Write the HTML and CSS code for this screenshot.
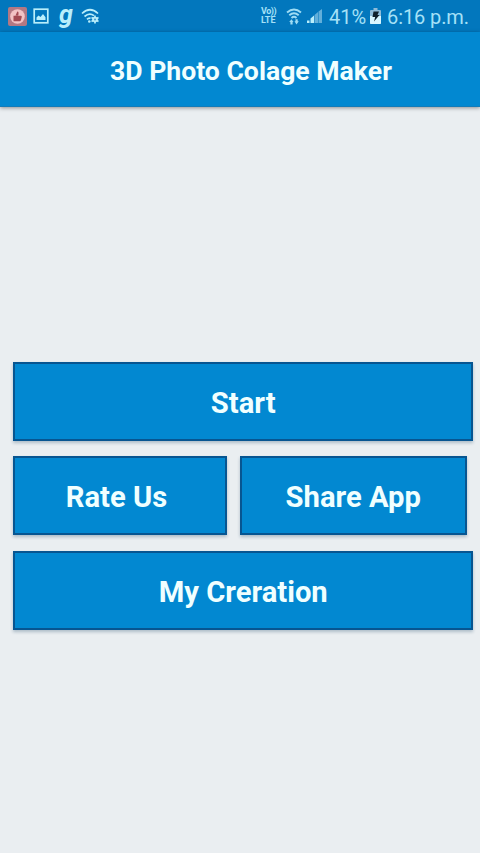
FILE: index.html
```html
<!DOCTYPE html>
<html lang="en">
<head>
<meta charset="utf-8">
<title>3D Photo Colage Maker</title>
<link rel="stylesheet" href="styles.css">
</head>
<body>
<div class="status">
  <div class="notices">
    <svg class="thumb" width="19" height="19" viewBox="0 0 19 19"><rect width="19" height="19" rx="2" fill="#b27883"/><circle cx="9.500" cy="9.500" r="7.300" fill="#f2c3c5"/><path d="M5.500 8.800h7.300c1.200 0 1 .8.900 1.500l-.7 2.700c-.3.900-.7 1.200-1.500 1.200H5.500zM7.500 8.500 9.300 4.500c1.400.2 1.500 1.200 1 4z" fill="#a34b54"/></svg>
    <svg class="image" width="16" height="16" viewBox="0 0 16 16"><rect x="1.200" y="1.200" width="13.600" height="13.600" fill="none" stroke="#b9eefb" stroke-width="1.700"/><path d="M3.500 12V9.500l2-2 2 1.500 2.500-3 2.500 3.200V12z" fill="#b9eefb"/></svg>
    <span class="letter">g</span>
    <svg class="wifi-set" width="19" height="16" viewBox="0 0 19 16"><g fill="none" stroke="#b9eefb" stroke-width="1.700"><path d="M1 5.500q8-7.500 16 0M3.500 8.500q5-4.500 9.500-.8M6 11.300q2-2 3.500-.8"/></g><path d="M14 7.500v8M10.500 9.500l7 4M17.500 9.500l-7 4" stroke="#b9eefb" stroke-width="1.700"/><circle cx="14" cy="11.500" r="2.800" fill="#b9eefb"/><circle cx="14" cy="11.500" r="1.100" fill="#4aa0d0"/><circle cx="8.300" cy="13.500" r="1.300" fill="#b9eefb"/></svg>
  </div>
  <div class="system">
    <div class="volte"><span>Vo))</span><span class="lte">LTE</span></div>
    <svg class="wifi" width="16" height="17" viewBox="0 0 16 17"><g fill="none" stroke="#9edcf4" stroke-width="1.900"><path d="M1 4.500q7-6 14 0M3.300 7.300q4.700-4.200 9.400 0M5.500 10q2.500-2.300 5 0"/></g><path d="M3.200 14 5.500 11.300 7.500 14H6.600v2.500H4.400V14zM8.500 13.300h1v-2h2.200v2h1.100L10.500 16.500z" fill="#9edcf4"/></svg>
    <svg class="signal" width="17" height="16" viewBox="0 0 17 16"><path d="M1 12.500h2.500V15H1zM4.500 10.500 8 7.500V15H4.500z" fill="#b9eefb"/><path d="M8.500 7 12 4v11H8.500zM12.500 3.500 16 1v14h-3.500z" fill="#62afda"/></svg>
    <span class="percent">41%</span>
    <svg class="battery" width="11" height="16" viewBox="0 0 11 16"><path d="M3.500 0h4v2H10q1 0 1 1v12q0 1-1 1H1q-1 0-1-1V3q0-1 1-1h2.500z" fill="#8dbbd8"/><path d="M0 8h11v7q0 1-1 1H1q-1 0-1-1z" fill="#d8f6ff"/><path d="M3.500 3.500H9L7.500 7H9.500L4 13.500 5.200 9H2.500z" fill="#10202b"/></svg>
    <span class="time">6:16 p.m.</span>
  </div>
</div>
<header class="bar"><h1>3D Photo Colage Maker</h1></header>
<main class="menu">
  <button class="btn">Start</button>
  <div class="pair">
    <button class="btn rate">Rate Us</button>
    <button class="btn">Share App</button>
  </div>
  <button class="btn">My Creration</button>
</main>
</body>
</html>
```
FILE: styles.css
```css
* { box-sizing: border-box; }
body {
  margin: 0;
  height: 853px;
  overflow: hidden;
  background: #eaeef1;
  font-family: Roboto, "Liberation Sans", sans-serif;
  display: flex;
  flex-direction: column;
}
.status {
  height: 32px;
  flex: none;
  display: flex;
  justify-content: space-between;
  background: #0277bd;
  color: #a5e1f7;
}
.notices, .system { display: flex; align-items: center; }
.notices { padding-left: 8px; }
.image { margin-left: 6px; }
.letter {
  width: 16px;
  margin-left: 10px;
  margin-bottom: 3px;
  color: #b9eefb;
  font: italic 700 25px/28px Roboto, "Liberation Sans", sans-serif;
}
.wifi-set { margin-left: 6px; }
.system { padding-right: 11px; white-space: nowrap; }
.volte {
  width: 16px;
  margin-right: 9px;
  display: flex;
  flex-direction: column;
  font-size: 9px;
  line-height: 9px;
  font-weight: 700;
}
.volte span:first-child { letter-spacing: -.5px; }
.signal { margin-left: 4px; }
.percent, .time { font-size: 20px; line-height: 32px; padding-top: 1px; }
.percent { width: 38px; margin-left: 6px; }
.battery { margin-left: 3px; }
.time { width: 82px; margin-left: 6px; letter-spacing: -.1px; }
.bar {
  height: 75px;
  flex: none;
  padding-left: 110px;
  display: flex;
  align-items: center;
  background: #0288d1;
  border-bottom: 1px solid #147bb8;
  box-shadow: 0 1px 4px rgba(0, 0, 0, .4);
}
h1 {
  margin: 4px 0 0;
  color: #f0ffff;
  font-size: 26.6px;
  line-height: 32px;
  font-weight: 700;
  white-space: nowrap;
}
.menu {
  display: grid;
  gap: 15.5px;
  padding: 254.500px 6.600px 0 13px;
  grid-auto-rows: 79px;
}
.pair {
  display: grid;
  grid-template-columns: 214px 226.500px;
  gap: 13px;
}
.btn {
  margin: 0;
  padding: 3px 0 0;
  border: 2px solid #075591;
  background: #0288d1;
  box-shadow: 0 2px 3px rgba(35, 75, 110, .3);
  color: #f0ffff;
  font: 700 29.2px/34px Roboto, "Liberation Sans", sans-serif;
}
.rate { padding-right: 7px; }
```
